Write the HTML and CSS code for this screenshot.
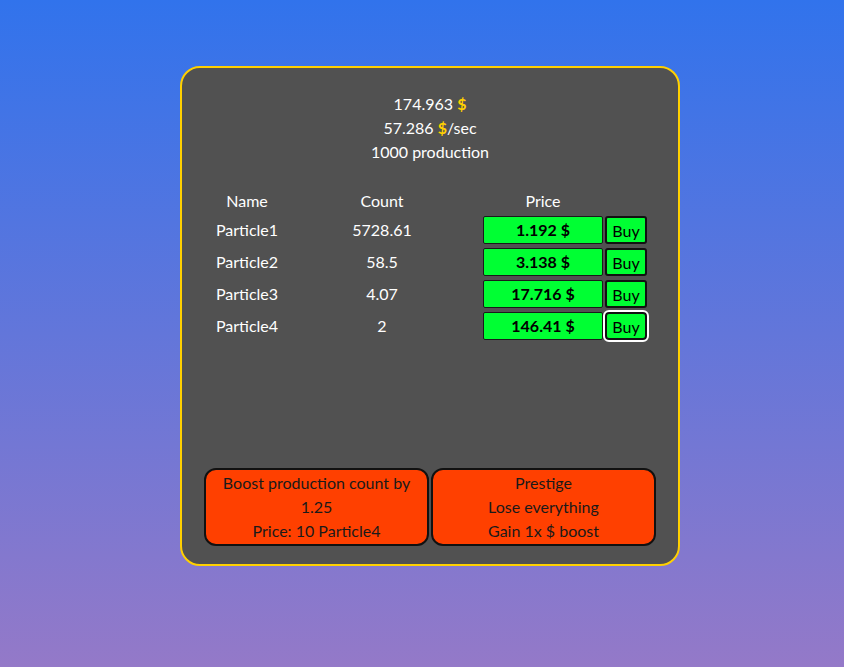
FILE: index.html
```html
<!DOCTYPE html>
<html>
<head>
<meta charset="utf-8">
<link rel="stylesheet" href="styles.css">
</head>
<body>
<div class="card">
  <div class="stats">
    <div>174.963 <span class="dollar">$</span></div>
    <div>57.286 <span class="dollar">$</span>/sec</div>
    <div>1000 production</div>
  </div>
  <div class="table">
    <div class="th">Name</div>
    <div class="th">Count</div>
    <div class="th th-price">Price</div>
    <div class="th"></div>

    <div class="td">Particle1</div>
    <div class="td">5728.61</div>
    <div class="price">1.192 $</div>
    <button class="buy">Buy</button>

    <div class="td">Particle2</div>
    <div class="td">58.5</div>
    <div class="price">3.138 $</div>
    <button class="buy">Buy</button>

    <div class="td">Particle3</div>
    <div class="td">4.07</div>
    <div class="price">17.716 $</div>
    <button class="buy">Buy</button>

    <div class="td">Particle4</div>
    <div class="td">2</div>
    <div class="price">146.41 $</div>
    <button class="buy focused">Buy</button>
  </div>
  <div class="spacer"></div>
  <div class="actions">
    <button class="action">Boost production count by 1.25<br>Price: 10 Particle4</button>
    <button class="action">Prestige<br>Lose everything<br>Gain 1x $ boost</button>
  </div>
</div>
</body>
</html>
```
FILE: styles.css
```css
html, body {
  margin: 0;
  height: 100%;
}
body {
  background: linear-gradient(to bottom, #3173ec 0%, #9479c8 100%);
  font-family: "Lato", "Open Sans", sans-serif;
  font-size: 16px;
  color: #ffffff;
  padding: 66px 0 0 180px;
  box-sizing: border-box;
}
.card {
  width: 500px;
  height: 500px;
  box-sizing: border-box;
  border: 2px solid #ffd000;
  border-radius: 20px;
  background: #515151;
  padding: 24px 22px 18px;
  display: flex;
  flex-direction: column;
}
.stats {
  text-align: center;
  line-height: 24px;
}
.dollar {
  color: #ffd000;
  font-weight: bold;
}
.table {
  margin-top: 25px;
  display: grid;
  grid-template-columns: 86px 184px 129px 44px;
  grid-auto-rows: 28px;
  grid-template-rows: 23px;
  row-gap: 4px;
  align-items: center;
}
.th, .td {
  text-align: center;
  line-height: 24px;
}
.th-price {
  justify-self: end;
  width: 120px;
}
.price {
  justify-self: end;
  width: 120px;
  height: 28px;
  box-sizing: border-box;
  border: 1px solid #1a1a1a;
  border-radius: 2px;
  background: #00ff33;
  color: #000;
  font-family: "Lato", "Open Sans", sans-serif;
  font-weight: bold;
  font-size: 16px;
  line-height: 26px;
  text-align: center;
}
.buy {
  justify-self: end;
  width: 42px;
  height: 28px;
  box-sizing: border-box;
  border: 2px solid #111;
  border-radius: 3px;
  background: #00ff33;
  color: #000;
  font-family: "Lato", "Open Sans", sans-serif;
  font-size: 16px;
  font-weight: normal;
  padding: 0;
}
.buy.focused {
  outline: 2px solid #ffffff;
  outline-offset: 0;
  border-radius: 4px;
}
.spacer {
  flex: 1;
}
.actions {
  display: flex;
  gap: 2px;
}
.action {
  flex: 1;
  height: 78px;
  box-sizing: border-box;
  border: 2px solid #111;
  border-radius: 12px;
  background: #ff4000;
  color: #1a1a1a;
  font-family: "Lato", "Open Sans", sans-serif;
  font-size: 16px;
  line-height: 24px;
  padding: 1px 14px;
}
```
